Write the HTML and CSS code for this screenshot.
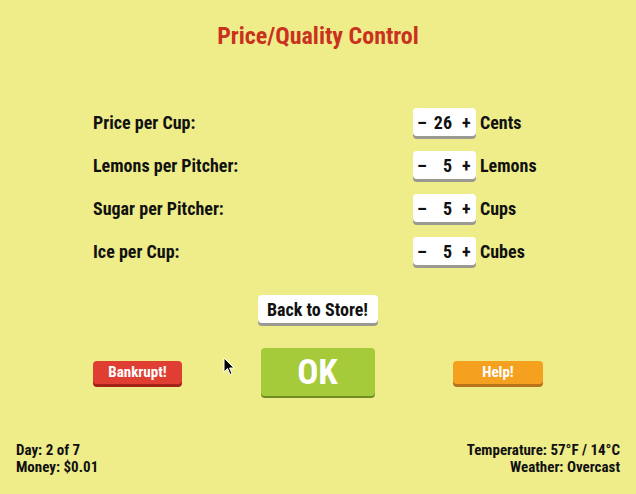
FILE: index.html
```html
<html lang="en">
<head>
    <meta charset="UTF-8">
    <meta name="viewport" content="width=device-width, initial-scale=1.0">
    <title>Price/Quality Control</title>
    <link rel="stylesheet" href="styles.css">
</head>
<body>
    <div class="screen">
        <h1 class="title">Price/Quality Control</h1>

        <div class="settings">
            <div class="label">Price per Cup:</div>
            <div class="stepper"><span class="step">–</span><span class="value">26</span><span class="step">+</span></div>
            <div class="unit">Cents</div>

            <div class="label">Lemons per Pitcher:</div>
            <div class="stepper"><span class="step">–</span><span class="value">5</span><span class="step">+</span></div>
            <div class="unit">Lemons</div>

            <div class="label">Sugar per Pitcher:</div>
            <div class="stepper"><span class="step">–</span><span class="value">5</span><span class="step">+</span></div>
            <div class="unit">Cups</div>

            <div class="label">Ice per Cup:</div>
            <div class="stepper"><span class="step">–</span><span class="value">5</span><span class="step">+</span></div>
            <div class="unit">Cubes</div>
        </div>

        <div class="back-row">
            <button class="btn btn-white">Back to Store!</button>
        </div>

        <div class="action-row">
            <button class="btn btn-red">Bankrupt!</button>
            <button class="btn btn-green">OK</button>
            <button class="btn btn-orange">Help!</button>
        </div>

        <div class="status">
            <div class="status-left">
                <div>Day: 2 of 7</div>
                <div>Money: $0.01</div>
            </div>
            <div class="status-right">
                <div>Temperature: 57°F / 14°C</div>
                <div>Weather: Overcast</div>
            </div>
        </div>

        <svg class="cursor" width="12" height="19" viewBox="0 0 12 19">
            <path d="M1 1 L1 15 L4.5 11.5 L7 17.5 L9 16.6 L6.6 11 L11 11 Z" fill="#000" stroke="#fff" stroke-width="1"/>
        </svg>
    </div>
</body>
</html>
```

FILE: styles.css
```css
body {
    margin: 0;
    background-color: #efed8a;
    font-family: "Roboto Condensed", "Roboto", sans-serif;
    font-weight: bold;
    color: #111;
}
.screen {
    position: relative;
    width: 636px;
    height: 494px;
    display: flex;
    flex-direction: column;
}
.title {
    margin: 22px 0 0;
    text-align: center;
    font-size: 24px;
    line-height: 28px;
    color: #c8321f;
}
.settings {
    display: grid;
    grid-template-columns: 316px 63px auto;
    grid-auto-rows: 31px;
    row-gap: 12px;
    column-gap: 4px;
    align-items: center;
    padding-left: 93px;
    margin-top: 58px;
    font-size: 18px;
}
.label {
    margin-top: -3px;
}
.stepper {
    display: flex;
    align-items: center;
    height: 28px;
    margin-bottom: 3px;
    padding: 0 6px 0 4px;
    background: #fff;
    border-radius: 4px;
    box-shadow: 0 3px 0 #9a9a92;
}
.step {
    width: 8px;
    text-align: center;
}
.value {
    flex: 1;
    text-align: right;
    padding-right: 10px;
}
.unit {
    margin-top: -3px;
}
.back-row {
    display: flex;
    justify-content: center;
    margin-top: 27px;
}
.btn {
    font-family: inherit;
    font-weight: bold;
    border: none;
    border-radius: 4px;
    cursor: pointer;
    padding: 0;
}
.btn-white {
    width: 120px;
    height: 28px;
    margin-left: -1px;
    background: #fff;
    color: #111;
    font-size: 18px;
    box-shadow: 0 3px 0 #9a9a92;
}
.action-row {
    display: flex;
    justify-content: space-between;
    align-items: center;
    padding: 0 93px;
    margin-top: 25px;
}
.btn-red {
    width: 89px;
    height: 23px;
    background: #e03e33;
    color: #fff;
    font-size: 15px;
    box-shadow: 0 3px 0 #a3211b;
}
.btn-green {
    width: 114px;
    height: 48px;
    background: #a5cb3a;
    color: #fff;
    font-size: 35px;
    box-shadow: 0 2px 0 #6f8c22;
}
.btn-orange {
    width: 90px;
    height: 23px;
    background: #f5a11f;
    color: #fff;
    font-size: 15px;
    box-shadow: 0 3px 0 #b8741a;
}
.status {
    display: flex;
    justify-content: space-between;
    margin-top: auto;
    padding: 0 16px 18px;
    font-size: 15px;
    line-height: 17px;
}
.status-right {
    text-align: right;
}
.cursor {
    position: absolute;
    left: 223px;
    top: 357px;
}
```
